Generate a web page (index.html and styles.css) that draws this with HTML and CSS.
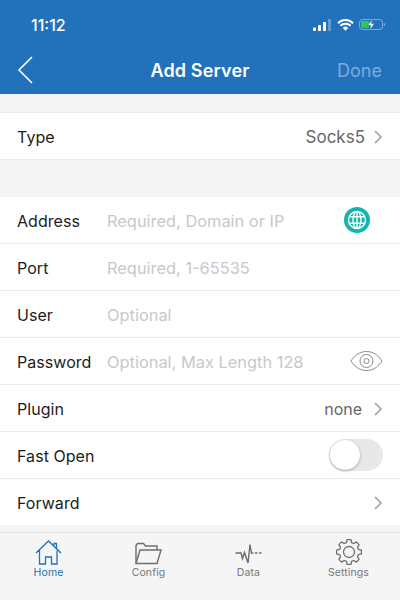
FILE: index.html
```html
<!DOCTYPE html>
<html lang="en">

<head>
    <meta charset="UTF-8">
    <title>Add Server</title>
    <link rel="stylesheet" href="styles.css">
</head>

<body>
    <div class="top">
        <div class="status">
            <span class="time">11:12</span>
            <div class="status-icons">
                <svg width="19" height="12" viewBox="0 0 19 12">
                    <rect x="0" y="8.5" width="3" height="3.5" rx="0.7" fill="#fff" />
                    <rect x="5" y="6" width="3" height="6" rx="0.7" fill="#fff" />
                    <rect x="10" y="3" width="3" height="9" rx="0.7" fill="#fff" />
                    <rect x="15" y="0" width="3" height="12" rx="0.7" fill="#fff" fill-opacity="0.3" />
                </svg>
                <svg width="17" height="12" viewBox="0 0 17 12">
                    <path d="M1 4.2a10.6 10.6 0 0 1 15 0M3.4 6.8a7.2 7.2 0 0 1 10.2 0" fill="none" stroke="#fff" stroke-width="2" />
                    <path d="M5.8 8.9a3.8 3.8 0 0 1 5.4 0L8.5 11.8z" fill="#fff" />
                </svg>
                <svg width="27" height="13" viewBox="0 0 27 13">
                    <rect x="0.5" y="1.5" width="23" height="10" rx="3" fill="none" stroke="#fff" stroke-opacity="0.4" />
                    <rect x="2" y="3" width="8" height="7" rx="1" fill="#34c84a" />
                    <path d="M24.800 5a1.500 1.500 0 0 1 0 3z" fill="#fff" fill-opacity="0.4" />
                    <path d="M14 0.500 8.500 7.500h3.200L10.500 12.500 15.500 5.500h-3.200z" fill="#fff" stroke="#2272bb" stroke-width="0.6" />
                </svg>
            </div>
        </div>
        <div class="nav">
            <svg class="back" width="16" height="28" viewBox="0 0 16 28">
                <path d="M15 1 2 14l13 13" fill="none" stroke="#fff" stroke-width="1.600" />
            </svg>
            <span class="nav-title">Add Server</span>
            <span class="nav-done">Done</span>
        </div>
    </div>

    <div class="group group-type">
        <div class="row">
            <span class="label">Type</span>
            <span class="value">Socks5</span>
            <svg class="chevron" width="9" height="14" viewBox="0 0 9 14"><path d="M1 1l6 6-6 6" /></svg>
        </div>
    </div>

    <div class="group group-form">
        <div class="row">
            <span class="label">Address</span>
            <span class="hint">Required, Domain or IP</span>
            <svg class="globe" width="26" height="26" viewBox="0 0 26 26">
                <circle cx="13" cy="13" r="13" fill="#12b5ae" />
                <g fill="none" stroke="#fff" stroke-width="1.4">
                    <circle cx="13" cy="13" r="8.5" />
                    <ellipse cx="13" cy="13" rx="4" ry="8.5" />
                    <path d="M13 4.5v17M5.2 9.8h15.6M5.2 16.2h15.6" />
                </g>
            </svg>
        </div>
        <div class="row">
            <span class="label">Port</span>
            <span class="hint">Required, 1-65535</span>
        </div>
        <div class="row">
            <span class="label">User</span>
            <span class="hint">Optional</span>
        </div>
        <div class="row">
            <span class="label">Password</span>
            <span class="hint">Optional, Max Length 128</span>
            <svg class="eye" width="33" height="22" viewBox="0 0 33 22">
                <g fill="none" stroke="#8c8c8c" stroke-width="1">
                    <path d="M1 11C5 5 10 1.500 16.500 1.500S28 5 32 11c-4 6-9 9.500-15.500 9.500S5 17 1 11z" />
                    <circle cx="16.500" cy="11" r="6.500" />
                    <circle cx="16.500" cy="11" r="2.500" />
                </g>
            </svg>
        </div>
        <div class="row">
            <span class="label">Plugin</span>
            <span class="value value-plugin">none</span>
            <svg class="chevron" width="9" height="14" viewBox="0 0 9 14"><path d="M1 1l6 6-6 6" /></svg>
        </div>
        <div class="row">
            <span class="label">Fast Open</span>
            <div class="switch"><div class="knob"></div></div>
        </div>
        <div class="row">
            <span class="label">Forward</span>
            <svg class="chevron chevron-only" width="9" height="14" viewBox="0 0 9 14"><path d="M1 1l6 6-6 6" /></svg>
        </div>
    </div>

    <div class="tabs">
        <div class="tab active">
            <svg width="27" height="25" viewBox="0 0 27 25" fill="none" stroke="#2272bb" stroke-width="1.300">
                <path d="M1 13 13.500 1 26 13M19 7V3.500h2.500V9.500M4.500 10.500V24H10.500V17h6v7H22V10.500" />
            </svg>
            <span>Home</span>
        </div>
        <div class="tab">
            <svg width="27" height="23" viewBox="0 0 27 23" fill="none" stroke="#6e6e6e" stroke-width="1.400">
                <path d="M1 21.500V3.500L2.500 1.500h6l2 2.500h11.500V8" />
                <path d="M1 21.500 5 8h21l-4 13.500z" />
            </svg>
            <span>Config</span>
        </div>
        <div class="tab">
            <svg width="27" height="22" viewBox="0 0 27 22" fill="none" stroke="#6e6e6e" stroke-width="1.400">
                <path d="M.500 10h5.500l1.500 5.500 2-6 3.500 10.500 2-18.500 1.500 8.500h2M20 10h2.500M24 10h2.500" />
            </svg>
            <span>Data</span>
        </div>
        <div class="tab">
            <svg width="26" height="26" viewBox="0 0 26 26" fill="none" stroke="#6e6e6e" stroke-width="1.300" stroke-linejoin="round">
                <polygon points="14.95,0.65 15.54,3.53 17.9,4.51 20.35,2.89 23.11,5.65 21.49,8.1 22.47,10.46 25.35,11.05 25.35,14.95 22.47,15.54 21.49,17.9 23.11,20.35 20.35,23.11 17.9,21.49 15.54,22.47 14.95,25.35 11.05,25.35 10.46,22.47 8.1,21.49 5.65,23.11 2.89,20.35 4.51,17.9 3.53,15.54 0.65,14.95 0.65,11.05 3.53,10.46 4.51,8.1 2.89,5.65 5.65,2.89 8.1,4.51 10.46,3.53 11.05,0.65" />
                <circle cx="13" cy="13" r="5.500" />
            </svg>
            <span>Settings</span>
        </div>
    </div>
</body>

</html>
```

FILE: styles.css
```css
body {
    font-family: Inter, "Liberation Sans", sans-serif;
    background-color: #f4f4f4;
    margin: 0;
    height: 600px;
    overflow: hidden;
    display: flex;
    flex-direction: column;
}

.top {
    background-color: #2272bb;
    height: 94px;
    color: #fff;
}

.status {
    height: 46px;
    display: flex;
    align-items: center;
    justify-content: space-between;
    padding: 3px 14px 0 31px;
    box-sizing: border-box;
}

.time {
    font-size: 16px;
    font-weight: 500;
}

.status-icons {
    display: flex;
    align-items: center;
    gap: 5px;
}

.nav {
    height: 48px;
    display: flex;
    align-items: center;
    justify-content: space-between;
    padding: 0 18px 0 17px;
    position: relative;
}

.nav-title {
    position: absolute;
    left: 0;
    right: 0;
    text-align: center;
    font-size: 18px;
    font-weight: 600;
    letter-spacing: 0.15px;
}

.nav-done {
    font-size: 18px;
    color: #7fabd8;
}

.group {
    background-color: #fff;
    border-top: 1px solid #ebebeb;
    border-bottom: 1px solid #ebebeb;
}

.group-type {
    margin-top: 18px;
}

.group-form {
    margin-top: 36px;
    border-top: 1px solid #f4f4f4;
    border-bottom: 0;
}

.row {
    height: 44px;
    padding: 2px 17px 0;
    display: flex;
    align-items: center;
    border-bottom: 1px solid #ebebeb;
    font-size: 16px;
    color: #1c1c1c;
}

.group-type .row,
.group-form .row:last-child {
    border-bottom: 0;
}

.label {
    width: 90px;
    flex-shrink: 0;
    letter-spacing: 0.05px;
}

.hint {
    flex: 1;
    color: #c8c8c8;
    font-size: 16.400px;
}

.value {
    margin-left: auto;
    color: #666;
    font-size: 17px;
}

.value-plugin {
    margin-right: 3px;
    font-size: 16px;
}

.chevron {
    margin-left: 9px;
    fill: none;
    stroke: #b0b0b0;
    stroke-width: 1.800;
}

.chevron-only {
    margin-left: auto;
}

.globe {
    margin-right: 13px;
    margin-top: -2px;
}

.eye {
    margin-top: -2px;
}

.switch {
    margin-left: auto;
    margin-top: -2px;
    width: 54px;
    height: 32px;
    border-radius: 16px;
    background-color: #e8e8e8;
    padding: 1px;
    box-sizing: border-box;
}

.knob {
    width: 30px;
    height: 30px;
    border-radius: 50%;
    background-color: #fff;
    box-shadow: 0 1px 3px rgba(0, 0, 0, 0.3);
}

.tabs {
    margin-top: 7px;
    flex: 1;
    display: grid;
    grid-template-columns: repeat(4, 1fr);
    border-top: 1px solid #e6e6e6;
    padding: 6px 0 0 0;
    background-color: #f5f5f5;
}

.tab {
    display: flex;
    flex-direction: column;
    align-items: center;
    height: 40px;
    justify-content: flex-end;
    gap: 1px;
    margin-left: -3px;
    font-size: 10.500px;
    letter-spacing: 0.1px;
    color: #777;
}

.tab.active {
    color: #2272bb;
}
```
